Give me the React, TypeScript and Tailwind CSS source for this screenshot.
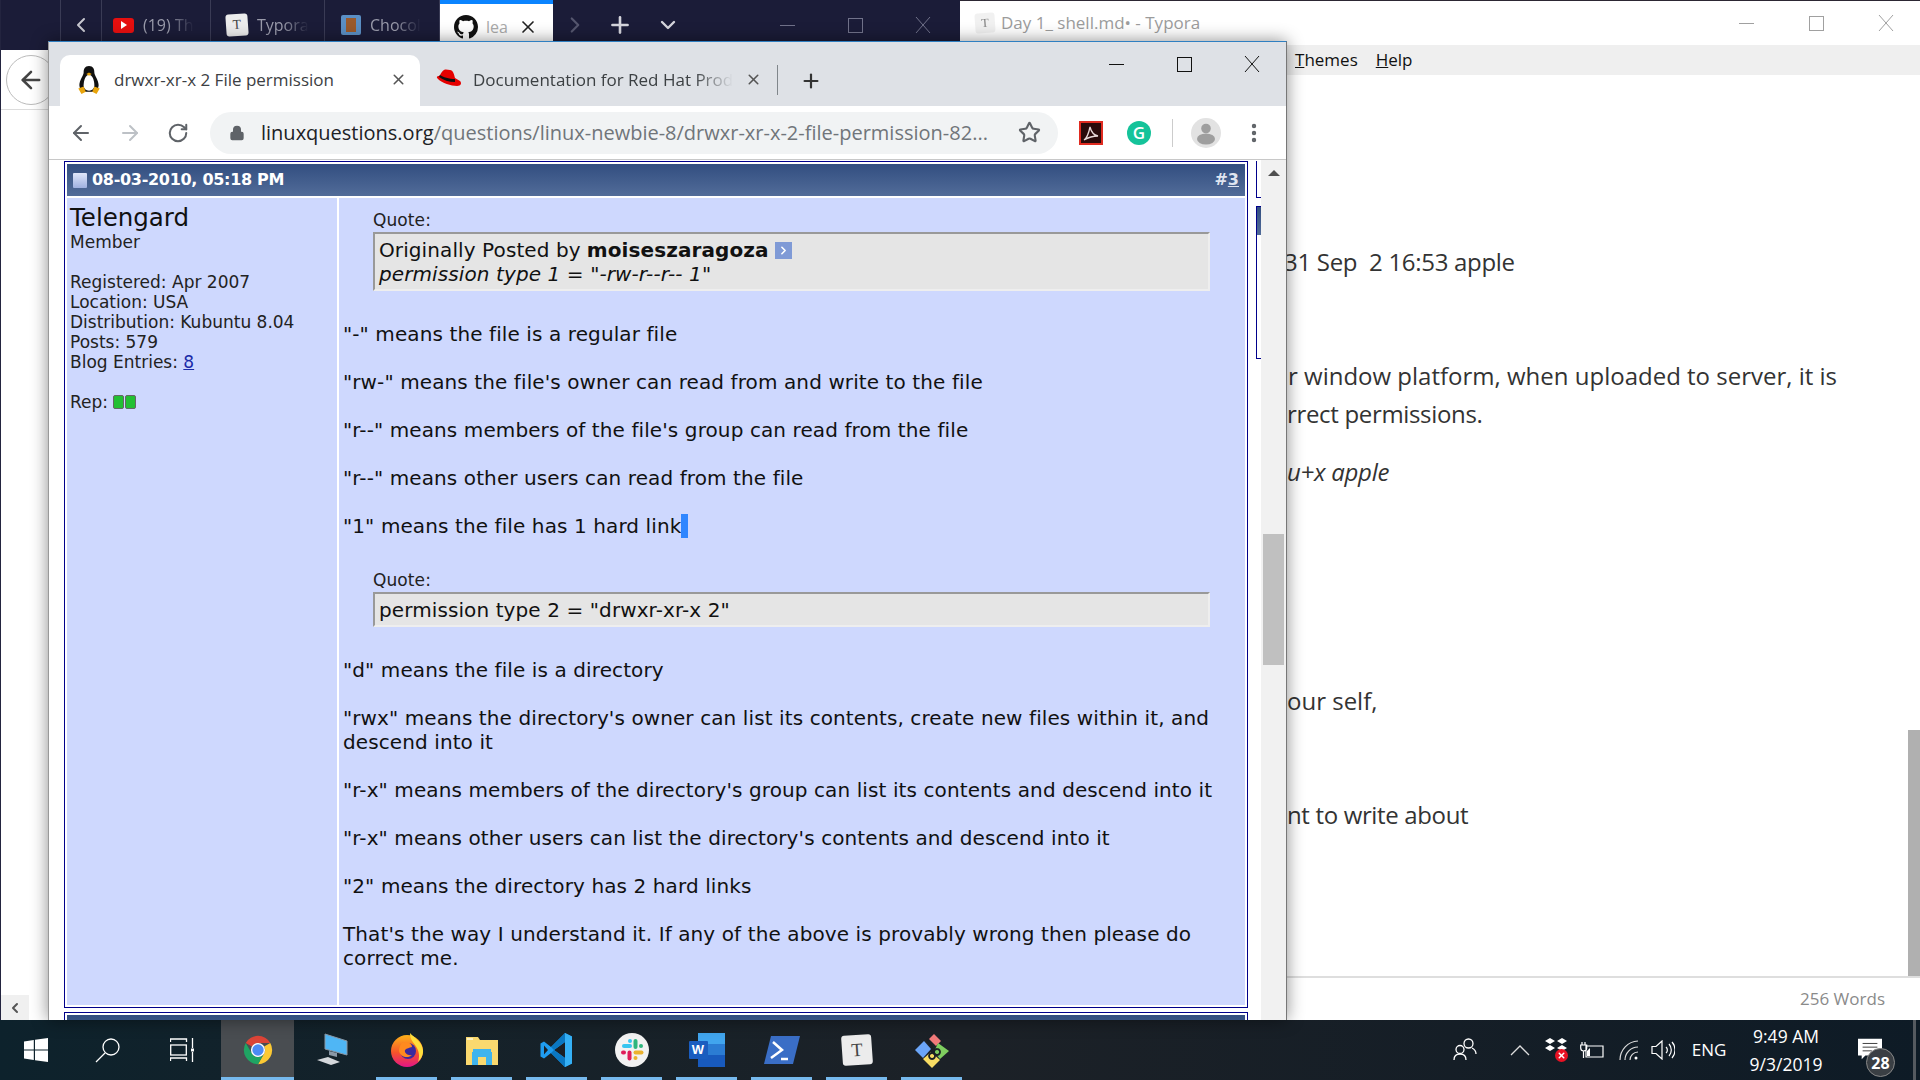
import { ArrowLeft, ArrowRight, ChevronDown, ChevronLeft, ChevronRight, Lock, MoreVertical, Plus, RotateCw, Star, X } from 'lucide-react'

const post = 'font-["DejaVu_Sans",sans-serif] text-[20px] leading-[24px] tracking-[0.1px] text-[#111]'
const side = 'font-["DejaVu_Sans",sans-serif] text-[17px] leading-[20px] text-[#222]'

function WinControls({ color, className, slot = 68 }: { color: string; className: string; slot?: number }) {
    return (
        <div className={`flex items-center ${className}`}>
            <div className="flex h-full items-center justify-center" style={{ width: slot }}>
                <div className="h-px w-[15px]" style={{ background: color }} />
            </div>
            <div className="flex h-full items-center justify-center" style={{ width: slot }}>
                <div className="h-[15px] w-[15px] border" style={{ borderColor: color }} />
            </div>
            <div className="flex h-full items-center justify-center" style={{ width: slot }}>
                <svg width="18" height="18" viewBox="0 0 18 18">
                    <path d="M2 1 L16 17 M16 1 L2 17" stroke={color} strokeWidth="1" />
                </svg>
            </div>
        </div>
    )
}

function TabIconT({ size = 20 }: { size?: number }) {
    return (
        <div
            className="flex shrink-0 rotate-[-4deg] items-center justify-center rounded-[3px] bg-[#ececec] font-['Liberation_Serif',serif] text-[#444]"
            style={{ width: size, height: size, fontSize: size * 0.62 }}
        >
            T
        </div>
    )
}

function BackTab({ width, icon, label }: { width: number; icon: React.ReactNode; label: string }) {
    return (
        <div className="flex h-full shrink-0 items-center gap-[9px] overflow-hidden border-r border-[#3a3b55] pl-[11px]" style={{ width }}>
            {icon}
            <span className="font-['Open_Sans',sans-serif] text-[16px] whitespace-nowrap text-[#9a9bab] [mask-image:linear-gradient(to_right,black_50%,transparent_100%)]">
                {label}
            </span>
        </div>
    )
}

function GitHubMark({ size }: { size: number }) {
    return (
        <svg width={size} height={size} viewBox="0 0 16 16" className="shrink-0">
            <path
                fill="#111"
                d="M8 0C3.58 0 0 3.58 0 8c0 3.54 2.29 6.53 5.47 7.59.4.07.55-.17.55-.38 0-.19-.01-.82-.01-1.49-2.01.37-2.53-.49-2.69-.94-.09-.23-.48-.94-.82-1.13-.28-.15-.68-.52-.01-.53.63-.01 1.08.58 1.23.82.72 1.21 1.87.87 2.33.66.07-.52.28-.87.51-1.07-1.78-.2-3.64-.89-3.64-3.95 0-.87.31-1.59.82-2.15-.08-.2-.36-1.02.08-2.12 0 0 .67-.21 2.2.82.64-.18 1.32-.27 2-.27s1.36.09 2 .27c1.53-1.04 2.2-.82 2.2-.82.44 1.1.16 1.92.08 2.12.51.56.82 1.27.82 2.15 0 3.07-1.87 3.75-3.65 3.95.29.25.54.73.54 1.48 0 1.07-.01 1.93-.01 2.2 0 .21.15.46.55.38A8.01 8.01 0 0 0 16 8c0-4.42-3.58-8-8-8z"
            />
        </svg>
    )
}

function BackWindow() {
    return (
        <div className="flex w-[960px] shrink-0 flex-col border-l border-[#23243f] bg-white">
            <div className="flex h-[50px] items-center bg-[#1b1c38]">
                <div className="h-full w-[60px] shrink-0 border-r border-[#3a3b55]" />
                <div className="flex h-full w-[41px] shrink-0 items-center justify-center border-r border-[#3a3b55]">
                    <ChevronLeft size={24} color="#c8c8d0" strokeWidth={2} />
                </div>
                <BackTab
                    width={109}
                    label="(19) Th"
                    icon={
                        <div className="flex h-[15px] w-[21px] shrink-0 items-center justify-center rounded-[3px] bg-[#e60f0f]">
                            <div className="h-0 w-0 border-y-[4px] border-l-[6px] border-y-transparent border-l-white" />
                        </div>
                    }
                />
                <BackTab
                    width={114}
                    label="Typora"
                    icon={
                        <div className="ml-[4px]">
                            <TabIconT size={22} />
                        </div>
                    }
                />
                <BackTab
                    width={115}
                    label="Chocol"
                    icon={
                        <div className="ml-[5px] flex h-[20px] w-[20px] shrink-0 items-center justify-center rounded-[2px] bg-[#5b8fc4]">
                            <div className="h-[14px] w-[10px] bg-[#9a5a2c]" />
                        </div>
                    }
                />
                <div className="flex h-full w-[113px] shrink-0 items-center gap-[8px] border-t-[4px] border-[#0a84ff] bg-white pl-[14px]">
                    <GitHubMark size={24} />
                    <span className="w-[24px] overflow-hidden font-['Open_Sans',sans-serif] text-[16px] text-[#aaa]">lea</span>
                    <X size={20} color="#222" strokeWidth={2} />
                </div>
                <ChevronRight size={26} color="#55566e" strokeWidth={2} className="ml-[9px]" />
                <Plus size={26} color="#d5d5dc" strokeWidth={2.4} className="ml-[19px]" />
                <ChevronDown size={24} color="#d5d5dc" strokeWidth={2.4} className="ml-[23px]" />
                <WinControls color="#71728a" className="ml-[73px] h-full" />
            </div>
            <div className="flex h-[60px] items-center border-b border-[#dcdcdc] pl-[5px]">
                <div className="flex h-[50px] w-[50px] items-center justify-center rounded-full border border-[#bbb]">
                    <ArrowLeft size={28} color="#444" strokeWidth={2.2} />
                </div>
            </div>
            <div className="mt-auto flex h-[25px] w-[28px] items-center justify-center bg-[#f0f0f0]">
                <ChevronLeft size={16} color="#555" strokeWidth={3} />
            </div>
        </div>
    )
}

function Typora() {
    const line = "font-['Open_Sans',sans-serif] text-[24px] leading-[38px] text-[#333] whitespace-pre"
    return (
        <div className="flex min-w-0 flex-1 flex-col border-t border-[#2c2733] bg-white">
            <div className="flex h-[44px] items-center">
                <div className="ml-[15px] opacity-70">
                    <TabIconT size={20} />
                </div>
                <span className="ml-[6px] font-['Open_Sans',sans-serif] text-[17px] text-[#9c9c9c]">Day 1_ shell.md• - Typora</span>
                <WinControls color="#a0a0a0" slot={70} className="mr-[-1px] ml-auto h-full" />
            </div>
            <div className="flex h-[30px] items-center gap-[18px] bg-[#efefef] pl-[335px] font-['Open_Sans',sans-serif] text-[17px] text-[#111]">
                <span>
                    <span className="underline">T</span>hemes
                </span>
                <span>
                    <span className="underline">H</span>elp
                </span>
            </div>
            <div className="flex min-h-0 flex-1">
                <div className="flex-1 pt-[168px] pl-[327px]">
                    <p className={`${line} -ml-[3px] tracking-[-0.3px]`}>31 Sep  2 16:53 apple</p>
                    <p className={`${line} mt-[76px] pl-[1px]`}>r window platform, when uploaded to server, it is</p>
                    <p className={`${line} tracking-[-0.33px]`}>rrect permissions.</p>
                    <p className={`${line} mt-[20px] tracking-[-0.27px] italic`}>u+x apple</p>
                    <p className={`${line} mt-[191px]`}>our self,</p>
                    <p className={`${line} mt-[76px] tracking-[-0.35px]`}>nt to write about</p>
                </div>
                <div className="flex w-[12px] flex-col justify-end">
                    <div className="h-[246px] bg-[#b0b0b0]" />
                </div>
            </div>
            <div className="flex h-[44px] items-center justify-end border-t-2 border-[#dedede] pr-[35px] font-['Open_Sans',sans-serif] text-[17px] text-[#8a8a8a]">
                256 Words
            </div>
        </div>
    )
}

function Tux() {
    return (
        <svg width="26" height="30" viewBox="0 0 24 28" className="shrink-0">
            <path d="M12 1c-4 0-5 3-5 6 0 3-4 7-4 12 0 3 2 5 4 6h10c2-1 4-3 4-6 0-5-4-9-4-12 0-3-1-6-5-6z" fill="#111" />
            <path d="M12 9c-3 0-5 5-5 10 0 3 2 5 5 5s5-2 5-5c0-5-2-10-5-10z" fill="#fff" />
            <path d="M9.500 8.500 12 7l2.500 1.500L12 10z" fill="#e8a40c" />
            <path d="M2 22l5-2 2 5-4 2zM22 22l-5-2-2 5 4 2z" fill="#e8a40c" />
        </svg>
    )
}

function RedHat() {
    return (
        <svg width="27" height="24" viewBox="0 0 27 24" className="shrink-0">
            <path d="M9 2c2-1 4 0 6 0 3 0 4 4 5 8l5 3c2 2 1 5-3 5-6 0-15-3-19-7-2-2-1-3 1-3 1 0 2-4 5-6z" fill="#e60000" />
            <path d="M4 9c4 3 10 5 16 5l0-3C14 11 8 9 5 7z" fill="#111" />
        </svg>
    )
}

function ChromeTabs() {
    return (
        <div className="flex h-[64px] shrink-0 bg-[#dee1e6]">
            <div className="mt-[13px] ml-[11px] flex h-[51px] w-[360px] items-center rounded-t-[10px] bg-white pb-[2px] pl-[16px]">
                <Tux />
                <span className="ml-[12px] font-['Open_Sans',sans-serif] text-[17px] text-[#3c4043]">drwxr-xr-x 2 File permission</span>
                <X size={17} color="#555" strokeWidth={2.2} className="mr-[13px] ml-auto" />
            </div>
            <div className="mt-[13px] flex h-[51px] w-[358px] items-center pb-[2px] pl-[15px]">
                <RedHat />
                <span className="ml-[11px] w-[260px] overflow-hidden font-['Open_Sans',sans-serif] text-[17px] whitespace-nowrap text-[#3c4043] [mask-image:linear-gradient(to_right,black_85%,transparent)]">
                    Documentation for Red Hat Prod
                </span>
                <X size={17} color="#555" strokeWidth={2.2} className="ml-[12px]" />
                <div className="ml-[15px] h-[30px] w-px bg-[#80868b]" />
            </div>
            <Plus size={22} color="#333" strokeWidth={2.4} className="mt-[28px] ml-[22px]" />
            <WinControls color="#111" className="ml-auto h-[44px]" />
        </div>
    )
}

function Toolbar() {
    return (
        <div className="flex h-[54px] shrink-0 items-center border-b border-[#c8c8c8] bg-white">
            <ArrowLeft size={24} color="#5f6368" strokeWidth={2} className="ml-[20px]" />
            <ArrowRight size={24} color="#bdc1c6" strokeWidth={2} className="ml-[25px]" />
            <RotateCw size={22} color="#5f6368" strokeWidth={2.2} className="ml-[25px]" />
            <div className="ml-[21px] flex h-[42px] w-[848px] items-center rounded-full bg-[#f1f3f4] pl-[19px]">
                <Lock size={16} color="#5f6368" fill="#5f6368" strokeWidth={2} />
                <div className="ml-[16px] w-[735px] font-['Open_Sans',sans-serif] text-[20px] whitespace-nowrap text-[#70757a]">
                    <span className="text-[#202124]">linuxquestions.org</span>/questions/linux-newbie-8/drwxr-xr-x-2-file-permission-82...
                </div>
                <Star size={23} color="#5f6368" strokeWidth={2.2} className="ml-[22px]" />
            </div>
            <svg width="24" height="24" viewBox="0 0 24 24" className="ml-[21px] shrink-0">
                <rect x="1" y="1" width="22" height="22" fill="#2a0a0a" stroke="#e02b20" strokeWidth="2" />
                <path d="M5 19c3-2 5-8 6-13 1 4 3 8 8 9-5 0-9 1-14 4z" fill="none" stroke="#e8d8d8" strokeWidth="1.3" />
            </svg>
            <div className="ml-[24px] flex h-[24px] w-[24px] shrink-0 items-center justify-center rounded-full bg-[#15c39a] font-['Open_Sans',sans-serif] text-[17px] font-semibold text-white">
                G
            </div>
            <div className="ml-[21px] h-[28px] w-px bg-[#ccc]" />
            <svg width="30" height="30" viewBox="0 0 30 30" className="ml-[18px] shrink-0">
                <circle cx="15" cy="15" r="15" fill="#e2e2e2" />
                <circle cx="15" cy="10.500" r="4.800" fill="#9e9e9e" />
                <ellipse cx="15" cy="21" rx="9" ry="5.500" fill="#9e9e9e" />
            </svg>
            <MoreVertical size={24} color="#5f6368" strokeWidth={2.4} className="ml-[21px]" />
        </div>
    )
}

function PostHeader() {
    return (
        <div className="flex h-[32px] items-center bg-gradient-to-b from-[#324e80] to-[#526c99] pr-[6px] pl-[6px] font-['DejaVu_Sans',sans-serif] text-[16px] font-bold text-white">
            <div className="h-[15px] w-[14px] rounded-[1px] bg-gradient-to-b from-[#dfe6fa] to-[#9fb0e0]" />
            <span className="ml-[5px] tracking-[-0.3px]">08-03-2010, 05:18 PM</span>
            <span className="ml-auto text-[#dfe4f0]">
                #<span className="underline">3</span>
            </span>
        </div>
    )
}

function QuoteBox({ children }: { children: React.ReactNode }) {
    return (
        <div className="mr-[35px] ml-[30px]">
            <div className={side}>
                <span className="block leading-[24px]">Quote:</span>
            </div>
            <div className={`border-2 border-t-[#999] border-r-[#eee] border-b-[#eee] border-l-[#999] bg-[#e5e5e5] px-[4px] pt-[4px] pb-[3px] ${post}`}>
                {children}
            </div>
        </div>
    )
}

function Post() {
    return (
        <div className="border border-[#00008b] p-[2px]">
            <PostHeader />
            <div className="mt-[2px] flex h-[807px] gap-[2px]">
                <div className={`w-[270px] shrink-0 bg-[#ced8fe] pl-[3px] ${side}`}>
                    <div className="mt-[7px] text-[24.5px] leading-[26px] text-[#111]">Telengard</div>
                    <div className="mt-[1px]">Member</div>
                    <div className="mt-[20px]">Registered: Apr 2007</div>
                    <div>Location: USA</div>
                    <div>Distribution: Kubuntu 8.04</div>
                    <div>Posts: 579</div>
                    <div>
                        Blog Entries: <span className="text-[#1a2aa8] underline">8</span>
                    </div>
                    <div className="mt-[20px] flex items-center gap-[5px]">
                        Rep:
                        <span className="flex gap-px">
                            <span className="h-[14px] w-[11px] rounded-[2px] border border-[#666] bg-[#22c032]" />
                            <span className="h-[14px] w-[11px] rounded-[2px] border border-[#666] bg-[#22c032]" />
                        </span>
                    </div>
                </div>
                <div className={`min-w-0 flex-1 bg-[#ced8fe] pt-[10px] pl-[4px] ${post}`}>
                    <QuoteBox>
                        <div className="flex items-center">
                            Originally Posted by <b className="ml-[6px]">moiseszaragoza</b>
                            <span className="ml-[6px] flex h-[17px] w-[17px] items-center justify-center bg-[#7f9ad6] text-white">
                                <ChevronRight size={13} strokeWidth={3} />
                            </span>
                        </div>
                        <div className="italic">permission type 1 = "-rw-r--r-- 1"</div>
                    </QuoteBox>
                    <p className="mt-[31px]">"-" means the file is a regular file</p>
                    <p className="mt-[24px]">"rw-" means the file's owner can read from and write to the file</p>
                    <p className="mt-[24px]">"r--" means members of the file's group can read from the file</p>
                    <p className="mt-[24px]">"r--" means other users can read from the file</p>
                    <p className="mt-[24px]">
                        "1" means the file has 1 hard link
                        <span className="inline-block h-[24px] w-[7px] bg-[#2f86ff] align-top" />
                    </p>
                    <div className="mt-[30px]">
                        <QuoteBox>permission type 2 = "drwxr-xr-x 2"</QuoteBox>
                    </div>
                    <p className="mt-[31px]">"d" means the file is a directory</p>
                    <p className="mt-[24px] whitespace-nowrap">
                        "rwx" means the directory's owner can list its contents, create new files within it, and
                        <br />
                        descend into it
                    </p>
                    <p className="mt-[24px] whitespace-nowrap">"r-x" means members of the directory's group can list its contents and descend into it</p>
                    <p className="mt-[24px] whitespace-nowrap">"r-x" means other users can list the directory's contents and descend into it</p>
                    <p className="mt-[24px]">"2" means the directory has 2 hard links</p>
                    <p className="mt-[24px] whitespace-nowrap">
                        That's the way I understand it. If any of the above is provably wrong then please do
                        <br />
                        correct me.
                    </p>
                </div>
            </div>
        </div>
    )
}

function SideColumn() {
    return (
        <div className="ml-[8px] w-[7px] shrink-0">
            <div className="h-[37px] border-b border-l border-[#00008b]" />
            <div className="mt-[8px] h-[153px] border-t border-b border-l border-[#00008b] bg-white">
                <div className="h-[28px] bg-gradient-to-b from-[#324e80] to-[#526c99]" />
                <div className="mt-[6px] ml-[4px] h-[20px] w-[2px] bg-[#e8872e]" />
                <div className="mt-[8px] ml-[4px] h-[18px] w-[2px] bg-[#e8872e]" />
            </div>
        </div>
    )
}

function ChromeWindow() {
    return (
        <div className="absolute top-[41px] left-[48px] flex h-[979px] w-[1239px] flex-col overflow-hidden border-t border-r border-l border-t-[#2f7fc1] border-r-[#777] border-l-[#999] bg-white shadow-[0_0_16px_rgba(0,0,0,0.45)]">
            <ChromeTabs />
            <Toolbar />
            <div className="flex min-h-0 flex-1">
                <div className="flex min-w-0 flex-1 pt-[1px] pl-[15px]">
                    <div className="w-[1184px] shrink-0">
                        <Post />
                        <div className="mt-[4px] border border-[#00008b] p-[2px]">
                            <div className="h-[32px] bg-gradient-to-b from-[#324e80] to-[#526c99]" />
                        </div>
                    </div>
                    <SideColumn />
                </div>
                <div className="w-[25px] shrink-0 bg-[#f1f1f1]">
                    <div className="mx-auto mt-[10px] h-0 w-0 border-x-[6px] border-b-[6px] border-x-transparent border-b-[#505050]" />
                    <div className="mx-auto mt-[358px] h-[131px] w-[21px] bg-[#c0c0c0]" />
                </div>
            </div>
        </div>
    )
}

function Slot({ children, active }: { children: React.ReactNode; active?: boolean }) {
    return (
        <div className="relative flex h-full w-[75px] shrink-0 items-center justify-center">
            {children}
            {active && <div className="absolute bottom-0 left-[7px] h-[3px] w-[61px] bg-[#76b9ed]" />}
        </div>
    )
}

function TrayItem({ width, children }: { width: number; children: React.ReactNode }) {
    return (
        <div className="flex h-full shrink-0 items-center justify-center" style={{ width }}>
            {children}
        </div>
    )
}

function ChromeLogo() {
    return (
        <svg width="34" height="34" viewBox="0 0 48 48">
            <path d="M6.680 14A20 20 0 0 1 41.320 14H24a10 10 0 0 0-8.660 5z" fill="#db4437" />
            <path d="M41.320 14A20 20 0 0 1 24 44L32.660 29a10 10 0 0 0 0-10z" fill="#fcc934" />
            <path d="M6.680 14A20 20 0 0 0 24 44L32.660 29a10 10 0 0 1-17.320 0z" fill="#1fa463" />
            <circle cx="24" cy="24" r="10" fill="#fff" />
            <circle cx="24" cy="24" r="8" fill="#4c8bf5" />
        </svg>
    )
}

function Taskbar() {
    return (
        <div className="flex h-[60px] shrink-0 items-center bg-gradient-to-r from-[#0d222c] via-[#1c2127] to-[#0e1b26] text-white">
            <div className="flex h-full w-[72px] shrink-0 items-center justify-center">
                <svg width="24" height="24" viewBox="0 0 24 24" fill="#fff">
                    <path d="M0 3.400 9.800 2v9.500H0zM11 1.800 24 0v11.500H11zM0 12.600h9.800V22L0 20.600zM11 12.600h13V24l-13-1.800z" />
                </svg>
            </div>
            <div className="flex h-full w-[72px] shrink-0 items-center justify-center">
                <svg width="26" height="26" viewBox="0 0 26 26" fill="none" stroke="#fff" strokeWidth="1.3">
                    <circle cx="16" cy="10" r="8" />
                    <path d="M10 16 1 25" />
                </svg>
            </div>
            <div className="flex h-full w-[77px] shrink-0 items-center justify-center">
                <svg width="26" height="24" viewBox="0 0 26 24" fill="none" stroke="#fff" strokeWidth="1.3">
                    <path d="M0.500 4V1h16v3M0.500 23v-3h16v3M22.500 0v10M22.500 14v10" />
                    <rect x="0.700" y="7" width="15.600" height="10" />
                    <rect x="21" y="10.500" width="3" height="3" fill="#fff" stroke="none" />
                </svg>
            </div>
            <div className="relative flex h-full w-[73px] shrink-0 items-center justify-center bg-[#494d51]">
                <ChromeLogo />
                <div className="absolute right-0 bottom-0 left-0 h-[3px] bg-[#76b9ed]" />
            </div>
            <Slot>
                <svg width="34" height="34" viewBox="0 0 34 34">
                    <path d="M10 1 32 8v14L10 16z" fill="#4fb6f5" stroke="#8a98a6" />
                    <path d="M14 18 22 20v4l-8-2z" fill="#8a98a6" />
                    <path d="M2 27 13 24l12 5-9 3z" fill="#d5d8dc" />
                </svg>
            </Slot>
            <Slot active>
                <svg width="34" height="34" viewBox="0 0 34 34">
                    <defs>
                        <linearGradient id="ff" x1="0" y1="0" x2="0" y2="1">
                            <stop offset="0" stopColor="#ffb31a" />
                            <stop offset="0.55" stopColor="#f5542a" />
                            <stop offset="1" stopColor="#e31587" />
                        </linearGradient>
                    </defs>
                    <circle cx="17" cy="18" r="16" fill="url(#ff)" />
                    <path d="M20 0c3 4 12 8 13 17 .5 5-2 9-5 12 2-6 1-12-3-17-2-3-5-6-5-12z" fill="#ffdf3d" />
                    <circle cx="18" cy="18" r="8" fill="#3b2a9e" />
                    <path d="M12 10c5-2 10 0 10 4-3 1-5 1-7 3-1 3 3 6 7 5-4 4-12 2-13-4 0-3 1-6 3-8z" fill="#ff8a1f" />
                </svg>
            </Slot>
            <Slot active>
                <svg width="34" height="30" viewBox="0 0 34 30">
                    <path d="M1 2h12l2 3h18v25H1z" fill="#fad96f" />
                    <path d="M2 3h6v2H2z" fill="#fff3c2" />
                    <path d="M7 30V17h1v-3h18v3h1v13h-6v-8h-8v8z" fill="#3fb4ee" />
                </svg>
            </Slot>
            <Slot active>
                <svg width="36" height="36" viewBox="0 0 36 36">
                    <path d="M26 1 33 4.500v27L26 35 12 21l-7 5.500-3.500-2v-13L5 9.500l7 5.500z" fill="#1f9cf0" />
                    <path d="M26 1v34l7-3.500v-27z" fill="#35b0f5" />
                    <path d="M26 10 15 18l11 8z" fill="#1b1f24" />
                    <path d="M5 13.500 9 18l-4 4.500z" fill="#1b1f24" />
                    <path d="M12 15 26 1v9L15 18zM12 21l14 14v-9l-11-8z" fill="#0a77c2" />
                </svg>
            </Slot>
            <Slot active>
                <svg width="34" height="34" viewBox="0 0 34 34">
                    <circle cx="17" cy="17" r="17" fill="#f2f2f2" />
                    <rect x="7" y="11" width="10" height="4" rx="2" fill="#36c5f0" />
                    <rect x="13" y="6" width="4" height="4" rx="2" fill="#36c5f0" />
                    <rect x="18.500" y="6" width="4" height="10" rx="2" fill="#2eb67d" />
                    <rect x="24" y="11" width="4" height="4" rx="2" fill="#2eb67d" />
                    <rect x="18.500" y="17.500" width="10" height="4" rx="2" fill="#ecb22e" />
                    <rect x="18.500" y="23" width="4" height="4" rx="2" fill="#ecb22e" />
                    <rect x="12.500" y="17.500" width="4" height="10" rx="2" fill="#e01e5a" />
                    <rect x="6" y="17.500" width="5" height="4" rx="2" fill="#e01e5a" />
                </svg>
            </Slot>
            <Slot active>
                <div className="relative h-[34px] w-[36px]">
                    <div className="absolute top-0 right-0 h-[11px] w-[27px] bg-[#41a5ee]" />
                    <div className="absolute top-[11px] right-0 h-[11px] w-[27px] bg-[#2b7cd3]" />
                    <div className="absolute top-[22px] right-0 h-[12px] w-[27px] bg-[#185abd]" />
                    <div className="absolute top-[8px] left-0 flex h-[18px] w-[19px] items-center justify-center rounded-[1px] bg-[#1a5dbf] font-['Liberation_Sans',sans-serif] text-[13px] font-bold text-white">
                        W
                    </div>
                </div>
            </Slot>
            <Slot active>
                <svg width="36" height="28" viewBox="0 0 36 28">
                    <path d="M7 0h29l-7 28H0z" fill="#3a6ec6" />
                    <path d="M9 6l9 8-11 8" fill="none" stroke="#fff" strokeWidth="2.500" />
                    <path d="M17 23h7" stroke="#fff" strokeWidth="2.500" />
                </svg>
            </Slot>
            <Slot active>
                <TabIconT size={30} />
            </Slot>
            <Slot active>
                <svg width="36" height="36" viewBox="0 0 36 36">
                    <path d="M15 7 20 2l7 7-5 5z" fill="#f27a7a" />
                    <path d="M1 18l9-9 7 8-8 9z" fill="#6ba5f8" />
                    <path d="M24 11l11 8-9 8-6-7z" fill="#7fce5f" />
                    <path d="M9 27l8-7 9 8-8 8z" fill="#f8dc63" />
                    <path d="M13 7l5 8v6M18 21a3 3 0 1 0 .1 0M23 17a3 3 0 1 0 .1 0" stroke="#1b1f24" strokeWidth="1.800" fill="none" />
                </svg>
            </Slot>
            <div className="ml-auto flex h-full w-[480px] shrink-0 items-center text-white">
                <div className="flex h-full w-[63px] shrink-0 items-center pb-[2px] pl-[13px]">
                    <svg width="24" height="24" viewBox="0 0 24 24" fill="none" stroke="#fff" strokeWidth="1.300">
                        <circle cx="15.500" cy="6.500" r="4.500" />
                        <circle cx="7" cy="12.500" r="4" />
                        <path d="M1 23c0-4 2-6 6-6s6 2 6 6M19 11c2 1 4 3 4 6" />
                    </svg>
                </div>
                <TrayItem width={34}>
                    <svg width="20" height="12" viewBox="0 0 20 12" fill="none" stroke="#ddd" strokeWidth="1.300">
                        <path d="M1 11 10 2l9 9" />
                    </svg>
                </TrayItem>
                <TrayItem width={38}>
                    <div className="relative h-[24px] w-[24px]">
                        <svg width="24" height="18" viewBox="0 0 24 18" fill="#fff">
                            <path d="M6 0l5 3-5 3-5-3zM18 0l5 3-5 3-5-3zM6 7l5 3-5 3-5-3zM18 7l5 3-5 3-5-3z" />
                        </svg>
                        <div className="absolute right-0 bottom-0 flex h-[13px] w-[13px] items-center justify-center rounded-full bg-[#e81123]">
                            <X size={9} color="#fff" strokeWidth={4} />
                        </div>
                    </div>
                </TrayItem>
                <TrayItem width={34}>
                    <svg width="24" height="18" viewBox="0 0 24 18" fill="none" stroke="#fff" strokeWidth="1.200">
                        <path d="M6 5h17v11H6zM2 1v3M5 1v3M0.700 4h6v3a3 3 0 0 1-6 0zM3.500 10v7" />
                        <path d="M7 10l3-3v8H7z" fill="#fff" stroke="none" />
                    </svg>
                </TrayItem>
                <TrayItem width={40}>
                    <svg width="20" height="20" viewBox="0 0 20 20" fill="none" stroke="#ddd" strokeWidth="1.200">
                        <path d="M1 20A19 19 0 0 1 19 1M6 20A13 13 0 0 1 19 7M11 20A8 8 0 0 1 19 12" />
                        <circle cx="17" cy="18" r="1.500" fill="#fff" stroke="none" />
                    </svg>
                </TrayItem>
                <TrayItem width={28}>
                    <svg width="24" height="20" viewBox="0 0 24 20" fill="none" stroke="#fff" strokeWidth="1.200">
                        <path d="M1 6.500h4L11 1v18l-6-5.500H1zM15 7a4 4 0 0 1 0 6M18 4a9 9 0 0 1 0 12M21 2a12 12 0 0 1 0 16" />
                    </svg>
                </TrayItem>
                <TrayItem width={64}>
                    <span className="font-['Open_Sans',sans-serif] text-[17px]">ENG</span>
                </TrayItem>
                <div className="flex w-[90px] shrink-0 flex-col items-center font-['Open_Sans',sans-serif] text-[17.5px] leading-[28px]">
                    <span>9:49 AM</span>
                    <span>9/3/2019</span>
                </div>
                <div className="relative h-full w-[82px] shrink-0">
                    <svg width="24" height="22" viewBox="0 0 26 22" fill="#fff" className="mt-[18px] ml-[27px]">
                        <path d="M0 0h26v18H8l-4 4v-4H0z" />
                        <path d="M5 5h16M5 9h16M5 13h10" stroke="#333" strokeWidth="1" />
                    </svg>
                    <div className="absolute top-[28px] left-[35px] flex h-[29px] w-[29px] items-center justify-center rounded-full border border-[#888] bg-[#3a3f44] font-['Open_Sans',sans-serif] text-[16px] font-bold">
                        28
                    </div>
                </div>
                <div className="h-full w-[3px] shrink-0 bg-[#555a60]" />
            </div>
        </div>
    )
}

export default function App() {
    return (
        <div className="relative flex h-[1080px] w-[1920px] flex-col overflow-hidden bg-white">
            <div className="flex min-h-0 flex-1">
                <BackWindow />
                <Typora />
            </div>
            <Taskbar />
            <ChromeWindow />
        </div>
    )
}
